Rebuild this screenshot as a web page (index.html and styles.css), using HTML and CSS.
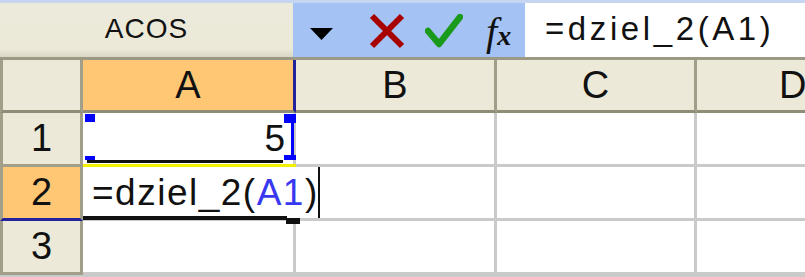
FILE: index.html
```html
<!DOCTYPE html>
<html>
<head>
<meta charset="utf-8">
<link rel="stylesheet" href="styles.css">
</head>
<body>
<div class="app">
  <div class="fbar">
    <div class="namebox">ACOS</div>
    <div class="fbtns">
      <svg class="ico-drop" width="23" height="12" viewBox="0 0 23 12"><polygon points="0,0 23,0 11.5,12" fill="#000"/></svg>
      <svg class="ico-x" width="38" height="36" viewBox="0 0 38 36"><path d="M4 3 L34 33 M34 3 L4 33" stroke="#A80000" stroke-width="6" stroke-linecap="butt" fill="none"/></svg>
      <svg class="ico-ok" width="38" height="34" viewBox="0 0 38 34"><path d="M3 17 L14 30 L35 3" stroke="#1A9A1A" stroke-width="6.5" stroke-linejoin="round" stroke-linecap="round" fill="none"/></svg>
      <span class="fx">f<span class="fx-x">x</span></span>
    </div>
    <div class="finput">=dziel_2(A1)</div>
  </div>
  <div class="sep"></div>
  <div class="grid">
    <div class="hd corner"></div>
    <div class="hd col sel">A</div>
    <div class="hd col">B</div>
    <div class="hd col">C</div>
    <div class="hd col last">D</div>

    <div class="hd row">1</div>
    <div class="cell a1">5
      <span class="rf rf-tl"></span><span class="rf rf-bl"></span><span class="rf rf-tr"></span><span class="rf rf-br"></span>
      <span class="rf-right"></span><span class="rf-bottom"></span>
    </div>
    <div class="cell"></div>
    <div class="cell"></div>
    <div class="cell"></div>

    <div class="hd row sel">2</div>
    <div class="cell a2">
      <div class="editor">=dziel_2(<span class="ref">A1</span>)</div>
      <span class="active-bottom"></span><span class="fill-handle"></span>
    </div>
    <div class="cell"></div>
    <div class="cell"></div>
    <div class="cell"></div>

    <div class="hd row">3</div>
    <div class="cell"></div>
    <div class="cell"></div>
    <div class="cell"></div>
    <div class="cell"></div>
  </div>
</div>
</body>
</html>
```
FILE: styles.css
```css
* { box-sizing: border-box; }
html, body { margin: 0; padding: 0; }
body {
  width: 805px;
  height: 277px;
  overflow: hidden;
  background: #c9c9c9;
  font-family: "Liberation Sans", Arial, sans-serif;
  color: #000;
}
.app { width: 805px; }

.fbar {
  display: flex;
  height: 57px;
  border-top: 3px solid #c6d6f1;
}
.namebox {
  width: 293px;
  background: linear-gradient(#eceadb 0%, #ece9d8 85%, #d9d6c6 100%);
  font-size: 28px;
  letter-spacing: 1px;
  display: flex;
  align-items: center;
  justify-content: center;
  padding-bottom: 2px;
  color: #111;
}
.fbtns {
  width: 232px;
  background: #a4c2f4;
  display: flex;
  align-items: center;
  padding-left: 17px;
}
.ico-drop { margin-top: 8px; }
.ico-x { margin-left: 35px; margin-top: 2px; }
.ico-ok { margin-left: 19px; margin-top: 2px; }
.fx {
  margin-left: 23px;
  font-family: "Liberation Serif", "Times New Roman", serif;
  font-style: italic;
  font-size: 40px;
  margin-top: 2px;
  color: #111;
  white-space: nowrap;
}
.fx-x { font-size: 28px; font-weight: bold; }
.finput {
  flex: 1;
  background: #fff;
  font-size: 33px;
  letter-spacing: 3.6px;
  display: flex;
  align-items: center;
  padding-left: 20px;
  padding-bottom: 2px;
  color: #111;
}

.sep {
  height: 3px;
  background: #9b9884;
}

.grid {
  display: grid;
  grid-template-columns: 83px 213px 201px 200px 1fr;
  grid-template-rows: 53px 54px 54px 54px;
}
.hd {
  background: #ece9d8;
  font-size: 38px;
  display: flex;
  align-items: center;
  justify-content: center;
  border-right: 3px solid #a19e8a;
  border-bottom: 3px solid #8f8c77;
  color: #111;
}
.corner { border-left: 3px solid #a19e8a; }
.hd.row { border-left: 3px solid #a19e8a; border-bottom-color: #a19e8a; }
.hd.sel { background: #ffc774; }
.hd.col.sel { border-right-color: #22229a; }
.hd.row.sel { border-bottom-color: #22229a; }
.hd.last { justify-content: flex-start; padding-left: 82px; }

.cell {
  background: #fff;
  border-right: 3px solid #cacaca;
  border-bottom: 3px solid #cacaca;
  position: relative;
  font-size: 37px;
  color: #111;
}
.a1 {
  display: flex;
  align-items: center;
  justify-content: flex-end;
  padding-right: 8px;
}
.rf { position: absolute; background: #0000ff; }
.rf-tl { left: 2px; top: 1px; width: 10px; height: 8px; }
.rf-bl { left: 2px; bottom: 4px; width: 10px; height: 4px; }
.rf-tr { right: -4px; top: 1px; width: 13px; height: 9px; }
.rf-br { right: -4px; bottom: 4px; width: 13px; height: 5px; }
.rf-right { position: absolute; right: -1px; top: 1px; bottom: 4px; width: 3px; background: #0000ff; }
.rf-bottom { position: absolute; left: 4px; right: 10px; bottom: 1px; height: 3px; background: #111; }
.a1::after {
  content: "";
  position: absolute;
  left: 0;
  right: -4px;
  bottom: -3px;
  height: 3px;
  background: #f4f000;
}

.a2 { overflow: visible; }
.editor {
  position: absolute;
  left: 0;
  top: 0;
  width: 237px;
  height: 51px;
  background: #fff;
  z-index: 2;
  border-right: 2px solid #111;
  padding-left: 9px;
  display: flex;
  align-items: center;
  font-size: 37px;
  letter-spacing: 1.5px;
  white-space: nowrap;
}
.ref { color: #3838f0; }
.active-bottom {
  position: absolute;
  left: 0;
  right: 6px;
  bottom: -2px;
  height: 4px;
  background: #111;
  z-index: 3;
}
.fill-handle {
  position: absolute;
  right: -7px;
  bottom: -6px;
  width: 14px;
  height: 6px;
  background: #111;
  z-index: 3;
}
```
